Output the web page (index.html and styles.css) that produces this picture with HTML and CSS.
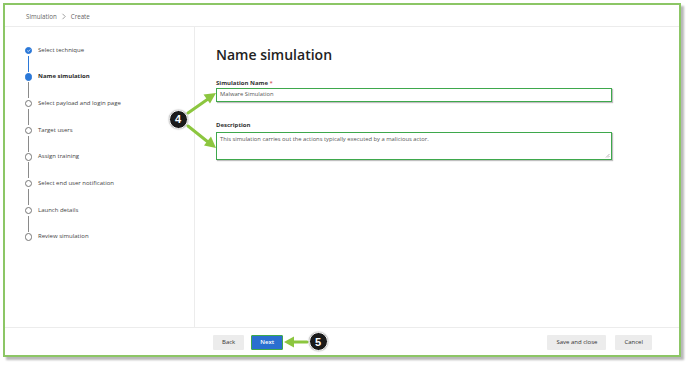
FILE: index.html
```html
<!DOCTYPE html>
<html>
<head>
<meta charset="utf-8">
<link rel="stylesheet" href="styles.css">
</head>
<body>
<div class="frame">
  <header class="crumbs">
    <span>Simulation</span>
    <svg class="chev" width="6" height="7" viewBox="0 0 6 7"><path d="M1.5 0.8 L4.2 3.5 L1.5 6.2" fill="none" stroke="#888" stroke-width="0.8"/></svg>
    <span>Create</span>
  </header>
  <div class="main">
    <nav class="steps">
      <div class="step done">
        <div class="marker"><span class="dot"><svg width="7" height="7" viewBox="0 0 7 7"><path d="M1.7 3.6 L3 4.8 L5.3 2.3" fill="none" stroke="#fff" stroke-width="1"/></svg></span><span class="line blue"></span></div>
        <span class="label">Select technique</span>
      </div>
      <div class="step current">
        <div class="marker"><span class="dot"></span><span class="line"></span></div>
        <span class="label">Name simulation</span>
      </div>
      <div class="step">
        <div class="marker"><span class="dot"></span><span class="line"></span></div>
        <span class="label">Select payload and login page</span>
      </div>
      <div class="step">
        <div class="marker"><span class="dot"></span><span class="line"></span></div>
        <span class="label">Target users</span>
      </div>
      <div class="step">
        <div class="marker"><span class="dot"></span><span class="line"></span></div>
        <span class="label">Assign training</span>
      </div>
      <div class="step">
        <div class="marker"><span class="dot"></span><span class="line"></span></div>
        <span class="label">Select end user notification</span>
      </div>
      <div class="step">
        <div class="marker"><span class="dot"></span><span class="line"></span></div>
        <span class="label">Launch details</span>
      </div>
      <div class="step last">
        <div class="marker"><span class="dot"></span></div>
        <span class="label">Review simulation</span>
      </div>
    </nav>
    <section class="content">
      <h1>Name simulation</h1>
      <div class="field-label">Simulation Name <span class="req">*</span></div>
      <div class="input">Malware Simulation</div>
      <div class="field-label desc-label">Description</div>
      <div class="textarea">This simulation carries out the actions typically executed by a malicious actor.
        <svg class="grip" width="5" height="5" viewBox="0 0 5 5"><path d="M4.5 1 L1 4.5 M4.5 3 L3 4.5" stroke="#888" stroke-width="0.6"/></svg>
      </div>
    </section>
  </div>
  <footer class="footer">
    <div class="footer-left">
      <button class="btn">Back</button>
      <button class="btn primary">Next</button>
    </div>
    <div class="footer-right">
      <button class="btn">Save and close</button>
      <button class="btn">Cancel</button>
    </div>
  </footer>
</div>

<svg class="arrows" width="688" height="365" viewBox="0 0 688 365">
  <g stroke="#8cc63f" stroke-width="3" stroke-linecap="round" fill="none">
    <path d="M188 113 L208 99"/>
    <path d="M188 126 L208 142"/>
    <path d="M307 342 L292 342"/>
  </g>
  <g fill="#8cc63f">
    <path d="M216 93 L203.5 94.5 L210 103.5 Z"/>
    <path d="M216 148 L211 136.5 L204 145.5 Z"/>
    <path d="M284 342 L294 336.5 L294 347.5 Z"/>
  </g>
</svg>
<div class="badge b4">4</div>
<div class="badge b5">5</div>
</body>
</html>
```
FILE: styles.css
```css
* { box-sizing: border-box; }
html, body { margin: 0; padding: 0; background: #fff; }
body {
  width: 688px;
  height: 365px;
  position: relative;
  font-family: "Open Sans", "Noto Sans", Arial, sans-serif;
  color: #333;
  overflow: hidden;
}
.frame {
  position: relative;
  margin: 3px 0 0 3px;
  width: 678px;
  height: 354px;
  border: 2px solid #8cc665;
  background: #fff;
  box-shadow: 3px 3px 2px rgba(0,0,0,0.28);
  display: flex;
  flex-direction: column;
}
.crumbs {
  height: 22px;
  flex: none;
  border-bottom: 1px solid #ececec;
  display: flex;
  align-items: center;
  gap: 3px;
  padding-left: 21px;
  padding-top: 1px;
  font-size: 6.2px;
  color: #666;
}
.chev { margin: 0 1px; }
.main {
  flex: 1;
  display: flex;
  min-height: 0;
}
.steps {
  width: 190px;
  flex: none;
  border-right: 1px solid #ececec;
  padding: 19.5px 0 0 19px;
  display: flex;
  flex-direction: column;
}
.step {
  height: 26.7px;
  display: flex;
  align-items: flex-start;
  gap: 5px;
}
.marker {
  width: 9px;
  height: 100%;
  display: flex;
  flex-direction: column;
  align-items: center;
}
.dot {
  width: 7.5px;
  height: 7.5px;
  border-radius: 50%;
  border: 1px solid #777;
  background: #fff;
  flex: none;
  display: flex;
  align-items: center;
  justify-content: center;
}
.done .dot, .current .dot {
  background: #2b78d8;
  border-color: #2b78d8;
}
.line {
  width: 1px;
  flex: 1;
  background: #8a8a8a;
  margin: 1.5px 0;
}
.line.blue { background: #2b78d8; }
.label {
  font-size: 6px;
  line-height: 7.5px;
  color: #444;
  white-space: nowrap;
}
.current .label { font-weight: 700; color: #2a2a2a; }
.content {
  flex: 1;
  padding: 18px 0 0 21px;
}
h1 {
  margin: 0;
  font-size: 14px;
  font-weight: 600;
  color: #222;
  line-height: 20px;
}
.field-label {
  margin-top: 13.5px;
  font-size: 6px;
  font-weight: 700;
  color: #333;
  line-height: 8px;
}
.req { color: #c33; font-weight: 400; }
.desc-label { margin-top: 19px; }
.input, .textarea {
  width: 396px;
  margin-top: 2px;
  border: 1.6px solid #3ea84c;
  box-shadow: 1px 1px 1px rgba(0,0,0,0.25);
  font-size: 5.8px;
  color: #555;
  padding: 0 0 0 3px;
  line-height: 10px;
  background: #fff;
}
.input { height: 13.5px; margin-top: 1.5px; }
.textarea {
  position: relative;
  height: 28px;
  margin-top: 3px;
  line-height: 10px;
  padding-top: 1px;
}
.grip { position: absolute; right: 1px; bottom: 1px; }
.footer {
  height: 28px;
  flex: none;
  border-top: 1px solid #ececec;
  display: flex;
  align-items: center;
  justify-content: space-between;
  padding: 1px 27px 0 208px;
}
.footer-left, .footer-right {
  display: flex;
  gap: 7px;
}
.footer-right { gap: 9px; }
.btn {
  height: 15px;
  border: none;
  background: #ececec;
  font-family: inherit;
  font-size: 6px;
  font-weight: 500;
  color: #333;
  padding: 0 9px;
  border-radius: 1px;
}
.btn.primary {
  background: #2a6fd0;
  color: #fff;
  border: 1.5px solid #3ea84c;
  padding: 0 8px;
  font-weight: 600;
}
.arrows {
  position: absolute;
  left: 0;
  top: 0;
  pointer-events: none;
}
.badge {
  position: absolute;
  width: 19px;
  height: 19px;
  border-radius: 50%;
  background: #1a1a1a;
  border: 1.5px solid #fff;
  box-shadow: 0 0 1.5px rgba(0,0,0,0.6);
  color: #fff;
  font-family: "Liberation Sans", Arial, sans-serif;
  font-weight: 700;
  font-size: 11px;
  display: flex;
  align-items: center;
  justify-content: center;
}
.b4 { left: 168.5px; top: 109.5px; }
.b5 { left: 308.5px; top: 332px; }
```
